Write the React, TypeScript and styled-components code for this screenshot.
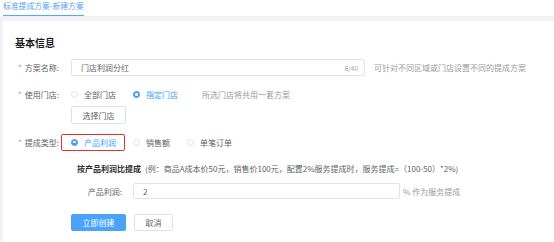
import React from "react";
import styled, { createGlobalStyle } from "styled-components";

const Global = createGlobalStyle`
  html, body { margin: 0; padding: 0; background: #fff; }
  body { font-family: "Noto Sans CJK SC", "Noto Sans", sans-serif; -webkit-font-smoothing: antialiased; }
  * { box-sizing: border-box; }
`;

const Page = styled.div`
  width: 554px;
  height: 242px;
  display: flex;
  flex-direction: column;
  overflow: hidden;
  background: #f0f2f5;
`;

const Header = styled.div`
  height: 16px;
  background: #fff;
  padding-left: 3px;
  display: flex;
  align-items: stretch;
`;

const Tab = styled.div`
  font-size: 7.8px;
  line-height: 12px;
  color: #5b9ff0;
  border-bottom: 1.5px solid #5aa6f8;
  height: 16px;
  white-space: nowrap;
`;

const Body = styled.div`
  flex: 1;
  padding: 5px 0 0 3px;
  display: flex;
`;

const Card = styled.div`
  flex: 1;
  background: #fff;
  padding: 15px 0 0 12px;
`;

const Title = styled.div`
  font-size: 10px;
  line-height: 14px;
  font-weight: 700;
  color: #1d1d1d;
`;

const Form = styled.div`
  margin-top: 9px;
  display: flex;
  flex-direction: column;
`;

const FormItem = styled.div<{ $mt?: number; $h: number }>`
  display: flex;
  align-items: center;
  margin-top: ${(p) => p.$mt ?? 0}px;
  height: ${(p) => p.$h}px;
`;

const Label = styled.div`
  width: 56px;
  flex: none;
  text-align: right;
  padding-right: 12px;
  font-size: 8px;
  color: #606266;
  white-space: nowrap;
`;

const Star = styled.span`
  color: #f56c6c;
  margin-right: 3px;
`;

const Control = styled.div`
  display: flex;
  align-items: center;
  height: 100%;
`;

const Input = styled.div<{ $w: number }>`
  width: ${(p) => p.$w}px;
  height: 100%;
  border: 1px solid #e2e4ea;
  border-radius: 2px;
  display: flex;
  align-items: center;
  padding: 0 6px 0 9px;
  font-size: 8px;
  color: #606266;
`;

const InputText = styled.span`
  flex: 1;
`;

const Count = styled.span`
  font-size: 6.5px;
  color: #a0a3a9;
`;

const Hint = styled.span<{ $ml: number }>`
  margin-left: ${(p) => p.$ml}px;
  font-size: 8px;
  color: #9a9ca2;
  white-space: nowrap;
`;

const RadioItem = styled.div<{ $active?: boolean }>`
  position: relative;
  display: flex;
  align-items: center;
  margin-right: 17px;
  font-size: 8px;
  color: ${(p) => (p.$active ? "#409eff" : "#606266")};
  white-space: nowrap;
`;

const RadioDot = styled.span<{ $checked?: boolean }>`
  width: 7px;
  height: 7px;
  border-radius: 50%;
  margin-right: 6px;
  border: 1px solid ${(p) => (p.$checked ? "#409eff" : "#dcdfe6")};
  background: ${(p) => (p.$checked ? "#409eff" : "#fff")};
  display: flex;
  align-items: center;
  justify-content: center;
  &::after {
    content: "";
    width: 2.5px;
    height: 2.5px;
    border-radius: 50%;
    background: #fff;
    display: ${(p) => (p.$checked ? "block" : "none")};
  }
`;

const Highlight = styled.div`
  position: absolute;
  left: -10px;
  right: -9px;
  top: -3px;
  bottom: -3px;
  border: 1.5px solid #e5322d;
  border-radius: 2px;
  pointer-events: none;
`;

const Button = styled.div<{ $primary?: boolean; $w: number }>`
  width: ${(p) => p.$w}px;
  height: 100%;
  border-radius: 2px;
  display: flex;
  align-items: center;
  justify-content: center;
  font-size: 8px;
  margin-right: 8px;
  border: 1px solid ${(p) => (p.$primary ? "#4aa2fb" : "#e0e2e8")};
  background: ${(p) => (p.$primary ? "#4aa2fb" : "#fff")};
  color: ${(p) => (p.$primary ? "#fff" : "#606266")};
`;

const Indent = styled.div`
  margin-left: 56px;
  display: flex;
  align-items: center;
  height: 100%;
`;

const Rule = styled.div`
  padding-left: 6px;
  font-size: 8px;
  color: #606266;
  white-space: nowrap;
`;

const RuleStrong = styled.span`
  font-weight: 700;
  color: #303133;
  margin-right: 4px;
`;

const SubLabel = styled.div`
  width: 62px;
  text-align: right;
  padding-right: 11px;
  font-size: 8px;
  color: #606266;
  white-space: nowrap;
`;

export default function App() {
  return (
    <>
      <Global />
      <Page>
        <Header>
          <Tab>标准提成方案-新建方案</Tab>
        </Header>
        <Body>
          <Card>
            <Title>基本信息</Title>
            <Form>
              <FormItem $h={17}>
                <Label>
                  <Star>*</Star>方案名称:
                </Label>
                <Control>
                  <Input $w={294}>
                    <InputText>门店利润分红</InputText>
                    <Count>6/40</Count>
                  </Input>
                  <Hint $ml={9}>可针对不同区域或门店设置不同的提成方案</Hint>
                </Control>
              </FormItem>
              <FormItem $mt={10} $h={17}>
                <Label>
                  <Star>*</Star>使用门店:
                </Label>
                <Control>
                  <RadioItem>
                    <RadioDot />
                    全部门店
                  </RadioItem>
                  <RadioItem $active>
                    <RadioDot $checked />
                    指定门店
                  </RadioItem>
                  <Hint $ml={7}>所选门店将共用一套方案</Hint>
                </Control>
              </FormItem>
              <FormItem $mt={3} $h={18}>
                <Indent>
                  <Button $w={55}>选择门店</Button>
                </Indent>
              </FormItem>
              <FormItem $mt={10} $h={16}>
                <Label>
                  <Star>*</Star>提成类型:
                </Label>
                <Control>
                  <RadioItem $active>
                    <RadioDot $checked />
                    产品利润
                    <Highlight />
                  </RadioItem>
                  <RadioItem>
                    <RadioDot />
                    销售额
                  </RadioItem>
                  <RadioItem>
                    <RadioDot />
                    单笔订单
                  </RadioItem>
                </Control>
              </FormItem>
              <FormItem $mt={11} $h={14}>
                <Indent>
                  <Rule>
                    <RuleStrong>按产品利润比提成</RuleStrong>
                    (例：商品A成本价50元，销售价100元，配置2%服务提成时，服务提成=（100-50）*2%)
                  </Rule>
                </Indent>
              </FormItem>
              <FormItem $mt={8} $h={16}>
                <Indent>
                  <SubLabel>产品利润:</SubLabel>
                  <Input $w={267}>
                    <InputText>2</InputText>
                  </Input>
                  <Hint $ml={3}>% 作为服务提成</Hint>
                </Indent>
              </FormItem>
              <FormItem $mt={15} $h={17}>
                <Indent>
                  <Button $primary $w={55}>立即创建</Button>
                  <Button $w={39}>取消</Button>
                </Indent>
              </FormItem>
            </Form>
          </Card>
        </Body>
      </Page>
    </>
  );
}
